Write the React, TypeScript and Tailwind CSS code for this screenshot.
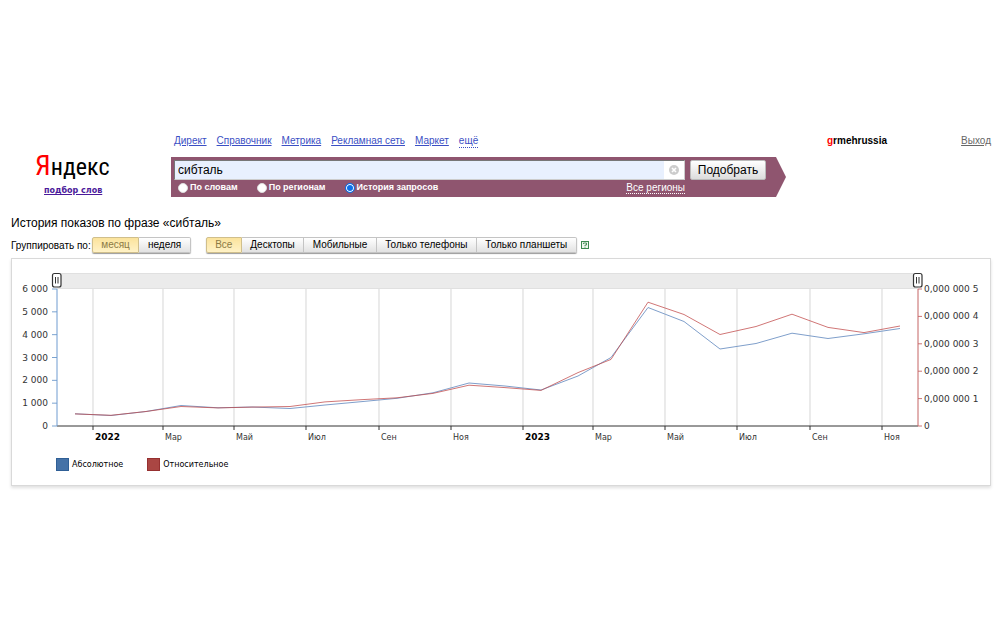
import React from 'react';
import clsx from 'clsx';

interface Point {
  x: number;
  abs: number;
  rel: number; // in units of 0.0000001
}

const NAV_LINKS = ['Директ', 'Справочник', 'Метрика', 'Рекламная сеть', 'Маркет'];
const MODES = ['По словам', 'По регионам', 'История запросов'];
const PERIODS = ['месяц', 'неделя'];
const DEVICES = ['Все', 'Десктопы', 'Мобильные', 'Только телефоны', 'Только планшеты'];

const POINTS: Point[] = [
  { x: 63, abs: 534, rel: 0.44 },
  { x: 99, abs: 460, rel: 0.39 },
  { x: 134, abs: 635, rel: 0.53 },
  { x: 169, abs: 898, rel: 0.71 },
  { x: 206, abs: 797, rel: 0.66 },
  { x: 240, abs: 832, rel: 0.69 },
  { x: 278, abs: 766, rel: 0.71 },
  { x: 313, abs: 920, rel: 0.88 },
  { x: 349, abs: 1064, rel: 0.96 },
  { x: 385, abs: 1214, rel: 1.03 },
  { x: 421, abs: 1454, rel: 1.19 },
  { x: 457, abs: 1883, rel: 1.49 },
  { x: 493, abs: 1752, rel: 1.4 },
  { x: 529, abs: 1577, rel: 1.3 },
  { x: 566, abs: 2190, rel: 1.95 },
  { x: 599, abs: 3000, rel: 2.43 },
  { x: 636, abs: 5190, rel: 4.52 },
  { x: 672, abs: 4577, rel: 4.07 },
  { x: 708, abs: 3372, rel: 3.34 },
  { x: 744, abs: 3613, rel: 3.63 },
  { x: 780, abs: 4064, rel: 4.08 },
  { x: 816, abs: 3832, rel: 3.6 },
  { x: 852, abs: 4038, rel: 3.41 },
  { x: 888, abs: 4270, rel: 3.65 },
];

const MONTHS = [
  { x: 81, label: '2022', bold: true },
  { x: 151, label: 'Мар' },
  { x: 222, label: 'Май' },
  { x: 294, label: 'Июл' },
  { x: 367, label: 'Сен' },
  { x: 439, label: 'Ноя' },
  { x: 511, label: '2023', bold: true },
  { x: 581, label: 'Мар' },
  { x: 653, label: 'Май' },
  { x: 725, label: 'Июл' },
  { x: 798, label: 'Сен' },
  { x: 870, label: 'Ноя' },
];

const LEFT = 45;
const RIGHT = 906;
const TOP = 30;
const BOTTOM = 167;
const ABS_LABELS = ['0', '1 000', '2 000', '3 000', '4 000', '5 000', '6 000'];
const REL_LABELS = ['0', '0,000 000 1', '0,000 000 2', '0,000 000 3', '0,000 000 4', '0,000 000 5'];

const scaleY = (value: number, max: number) => BOTTOM - (value / max) * (BOTTOM - TOP);
const toLine = (values: number[], max: number) =>
  values.map((v, i) => `${POINTS[i].x},${scaleY(v, max).toFixed(1)}`).join(' ');

interface ButtonGroupProps {
  items: string[];
  active: string;
  label: string;
  className?: string;
}

const ButtonGroup: React.FC<ButtonGroupProps> = ({ items, active, label, className }) => (
  <div role="group" aria-label={label} className={clsx('flex h-4 rounded-xs shadow-[0_1px_1px_#999]', className)}>
    {items.map((item) => (
      <button
        key={item}
        type="button"
        aria-pressed={item === active}
        className={clsx(
          'flex-auto border border-l-0 px-2 leading-[14px] whitespace-nowrap first:rounded-l-xs first:border-l last:rounded-r-xs',
          item === active
            ? 'border-[#d0bf8c] bg-linear-to-b from-[#fbe39c] to-[#fff2c6] text-[#8c7a45]'
            : 'border-[#c4c4c4] bg-linear-to-b from-white to-[#e2e2e2] text-black',
        )}
      >
        {item}
      </button>
    ))}
  </div>
);

const SliderHandle: React.FC<{ x: number }> = ({ x }) => (
  <g stroke="#333">
    <rect x={x - 4.5} y={14.5} width={8.5} height={13.5} rx={2} fill="#fff" strokeWidth={1.2} />
    <path d={`M${x - 1.5} 18v6.5M${x + 1} 18v6.5`} />
  </g>
);

const HistoryChart: React.FC = () => (
  <svg viewBox="0 0 978 190" className="block w-full font-['DejaVu_Sans',sans-serif] text-[8px]" role="img" aria-label="История показов">
    <rect x={LEFT} y={14} width={RIGHT - LEFT} height={16} fill="#ebebeb" />
    <path d={`M${LEFT} 14.5H${RIGHT}M${LEFT} 29.5H${RIGHT}`} stroke="#e0e0e0" />

    {MONTHS.map(({ x, label, bold }) => (
      <g key={x}>
        <path d={`M${x} ${TOP}V${BOTTOM}`} stroke="#e2e2e2" strokeWidth={1.4} />
        <path d={`M${x} ${BOTTOM}v4`} stroke="#333" />
        <text x={x + 2} y={181} fill={bold ? '#000' : '#333'} className={bold ? 'text-[9px] font-bold' : undefined}>
          {label}
        </text>
      </g>
    ))}

    {/* Axes */}
    {ABS_LABELS.map((label, i) => (
      <g key={label}>
        <path d={`M${LEFT - 5} ${scaleY(i, 6)}h5`} stroke="#7ba3d0" />
        <text x={36} y={scaleY(i, 6) + 3} textAnchor="end" fill="#333" className="text-[9px]">
          {label}
        </text>
      </g>
    ))}
    {REL_LABELS.map((label, i) => (
      <g key={label}>
        <path d={`M${RIGHT} ${scaleY(i, 5)}h4`} stroke="#cc7474" />
        <text x={912} y={scaleY(i, 5) + 3} fill="#333" className="text-[9px]">
          {label}
        </text>
      </g>
    ))}
    <path d={`M${LEFT} ${BOTTOM}H${RIGHT}`} stroke="#333" />
    <path d={`M${LEFT} ${TOP}V${BOTTOM}`} stroke="#6f9bd0" />
    <path d={`M${RIGHT} ${TOP}V${BOTTOM}`} stroke="#c46464" />

    <polyline points={toLine(POINTS.map((p) => p.abs), 6000)} fill="none" stroke="#7f9fcb" />
    <polyline points={toLine(POINTS.map((p) => p.rel), 5)} fill="none" stroke="#c04848" strokeOpacity={0.75} />

    <SliderHandle x={LEFT} />
    <SliderHandle x={RIGHT} />
  </svg>
);

const Header: React.FC = () => (
  <header className="flex">
    <div className="w-[160px] shrink-0 pt-[14px] pl-6">
      <div className="font-['Roboto_Condensed','Open_Sans',sans-serif] text-[24px] leading-9 text-black">
        <span className="text-[28px] leading-none text-[#f00]">Я</span>ндекс
      </div>
      <a href="#" className="block pl-[9px] font-['DejaVu_Sans',sans-serif] text-[8px] leading-3 font-bold text-[#4b1a9a] underline">
        подбор слов
      </a>
    </div>

    <div className="min-w-0 flex-1">
      <div className="flex h-[22px] items-start">
        <nav className="flex w-4/5 gap-[10px] pl-[3px] leading-3 text-[#3b4fc4]">
          {NAV_LINKS.map((link) => (
            <a key={link} href="#" className="underline">
              {link}
            </a>
          ))}
          <a href="#" className="border-b border-dotted border-[#3b4fc4]">
            ещё
          </a>
        </nav>
        <div className="leading-3 font-bold text-black">
          <span className="text-[#f00]">g</span>rmehrussia
        </div>
        <a href="#" className="ml-auto leading-3 text-[#666] underline">
          Выход
        </a>
      </div>

      <form
        onSubmit={(e) => e.preventDefault()}
        className="w-3/4 bg-[#8f556f] pt-[3px] pr-5 pb-px pl-[3px] text-white [clip-path:polygon(0_0,calc(100%-10px)_0,100%_50%,calc(100%-10px)_100%,0_100%)]"
      >
        <div className="flex gap-[5px]">
          <div className="flex h-5 min-w-0 flex-1 items-center border border-t-[#777] border-r-[#ccc] border-b-[#ccc] border-l-[#777] bg-white">
            <input
              type="text"
              aria-label="Запрос"
              defaultValue="сибталь"
              className="h-full min-w-0 flex-1 bg-[#e8f0fe] px-[3px] text-[12px] text-black outline-none"
            />
            <button type="button" aria-label="Очистить" className="flex w-5 justify-center">
              <svg viewBox="0 0 10 10" className="size-[10px]">
                <circle cx="5" cy="5" r="5" fill="#ccc" />
                <path d="M3 3l4 4M7 3L3 7" stroke="#fff" strokeWidth="1.6" />
              </svg>
            </button>
          </div>
          <button
            type="submit"
            className="h-5 w-[76px] rounded-xs border border-[#bbb] bg-linear-to-b from-white to-[#dcdcdc] text-[12px] leading-4 text-black"
          >
            Подобрать
          </button>
        </div>
        <div className="flex h-4 items-center pr-[81px] pl-1">
          {MODES.map((mode) => (
            <label key={mode} className="mr-[19px] flex items-center gap-[2px] text-[9px] font-bold whitespace-nowrap">
              <input
                type="radio"
                name="mode"
                defaultChecked={mode === 'История запросов'}
                className="size-[10px] appearance-none rounded-full border border-[#ddd] bg-white checked:border-[#0b6fe8] checked:bg-[#0b6fe8] checked:shadow-[inset_0_0_0_1px_#fff]"
              />
              {mode}
            </label>
          ))}
          <a href="#" className="ml-auto border-b border-dotted border-white leading-[11px]">
            Все регионы
          </a>
        </div>
      </form>
    </div>
  </header>
);

export default function App() {
  return (
    <div className="min-h-screen bg-white pt-[135px] pr-[9px] pl-[11px] font-['Liberation_Sans',Arial,sans-serif] text-[10px] text-black">
      <Header />

      <h1 className="mt-[18px] text-[12px] leading-4">История показов по фразе «сибталь»</h1>

      <div className="mt-[6px] flex items-center">
        <span className="mr-px">Группировать по:</span>
        <ButtonGroup items={PERIODS} active="месяц" label="Группировать по" className="w-[99px]" />
        <ButtonGroup items={DEVICES} active="Все" label="Устройства" className="ml-[15px] w-[371px]" />
        <a href="#" aria-label="Помощь" className="ml-1">
          <svg viewBox="0 0 8 8" className="size-2" fill="none" stroke="#3c8a50">
            <rect x="0.5" y="0.5" width="7" height="7" fill="#eef6ee" />
            <path d="M2.5 3V2H5.5V4H4V5M4 5.7v1" strokeWidth="0.9" />
          </svg>
        </a>
      </div>

      <section className="mt-[5px] border border-[#d9d9d9] pb-[14px] shadow-[0_2px_3px_#e0e0e0]">
        <HistoryChart />
        <div className="mt-[9px] flex gap-6 pl-[44px] font-['DejaVu_Sans',sans-serif] text-[8px] leading-3">
          <div className="flex items-center gap-[3px]">
            <span className="size-[13px] border border-[#2f5f96] bg-[#4572a7]" />
            Абсолютное
          </div>
          <div className="flex items-center gap-[3px]">
            <span className="size-[13px] border border-[#963030] bg-[#aa4643]" />
            Относительное
          </div>
        </div>
      </section>
    </div>
  );
}
